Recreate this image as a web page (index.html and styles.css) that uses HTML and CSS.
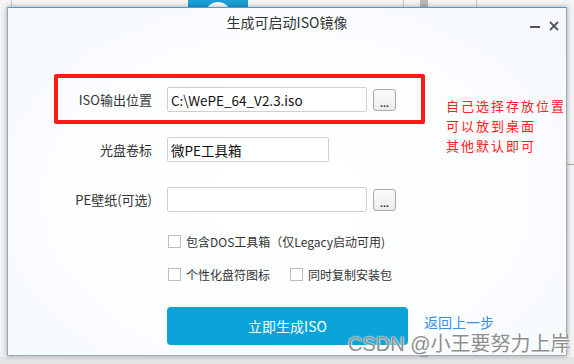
FILE: index.html
```html
<!DOCTYPE html>
<html lang="zh-CN">
<head>
    <meta charset="UTF-8">
    <title>生成可启动ISO镜像</title>
    <link rel="stylesheet" href="styles.css">
</head>
<body>

    <!-- 背景窗口 -->
    <div class="desktop">
        <div class="bg-tab"><span class="bg-tab-circle"></span></div>
        <div class="bg-line line-a"></div>
        <div class="bg-line line-b"></div>
        <div class="bg-line line-c"></div>
        <div class="bg-bar"></div>
        <div class="bg-bottom"></div>
        <div class="bg-side"></div>
    </div>

    <!-- 对话框 -->
    <div class="dialog">
        <div class="titlebar">
            <span class="title">生成可启动ISO镜像</span>
            <span class="win-min"></span>
            <span class="win-close">
                <svg width="10" height="10" viewBox="0 0 10 10"><path d="M1 1L9 9M9 1L1 9" stroke="#555" stroke-width="1.8"/></svg>
            </span>
        </div>

        <div class="form">
            <label class="field-label">ISO输出位置</label>
            <div class="field">
                <input class="text-input wide" type="text" value="C:\WePE_64_V2.3.iso">
                <button class="browse">...</button>
            </div>

            <label class="field-label">光盘卷标</label>
            <div class="field">
                <input class="text-input short" type="text" value="微PE工具箱">
            </div>

            <label class="field-label">PE壁纸(可选)</label>
            <div class="field">
                <input class="text-input wide" type="text" value="">
                <button class="browse">...</button>
            </div>

            <div class="checks">
                <div class="check-row">
                    <span class="check"><span class="box"></span>包含DOS工具箱（仅Legacy启动可用)</span>
                </div>
                <div class="check-row">
                    <span class="check"><span class="box"></span>个性化盘符图标</span>
                    <span class="check"><span class="box"></span>同时复制安装包</span>
                </div>
            </div>

            <div class="actions">
                <button class="primary">立即生成ISO</button>
                <a class="back-link" href="#">返回上一步</a>
            </div>
        </div>
    </div>

    <!-- 标注 -->
    <div class="mark-box"></div>
    <div class="mark-note">自己选择存放位置<br>可以放到桌面<br>其他默认即可</div>
    <div class="watermark">CSDN @小王要努力上岸</div>

</body>
</html>
```

FILE: styles.css
```css
body {
    margin: 0;
    width: 574px;
    height: 364px;
    overflow: hidden;
    position: relative;
    background-color: #eeeeee;
    font-family: "Noto Sans CJK SC", "Noto Sans", sans-serif;
}

/* 背景窗口 */
.desktop {
    position: absolute;
    left: 0;
    top: 0;
    width: 574px;
    height: 364px;
    background-color: #f3f3f3;
}

.bg-tab {
    position: absolute;
    left: 188px;
    top: 0;
    width: 60px;
    height: 8px;
    background-color: #1aa0d6;
    overflow: hidden;
}

.bg-tab-circle {
    position: absolute;
    left: 17px;
    top: 2px;
    width: 26px;
    height: 26px;
    border-radius: 50%;
    background-color: #ffffff;
}

.bg-line {
    position: absolute;
    top: 0;
    width: 1px;
    height: 364px;
    background-color: #c9c9c9;
}

.line-a { left: 11px; }
.line-b { left: 403px; }
.line-c { left: 476px; }

.bg-bar {
    position: absolute;
    left: 420px;
    top: 0;
    width: 8px;
    height: 364px;
    background-color: #b5b5b5;
}

.bg-bottom {
    position: absolute;
    left: 0;
    top: 357px;
    width: 574px;
    height: 7px;
    background-color: #e4e4e4;
}

.bg-side {
    position: absolute;
    left: 567px;
    top: 164px;
    width: 7px;
    height: 1px;
    background-color: #a9a9a9;
}

/* 对话框 */
.dialog {
    position: absolute;
    left: 7px;
    top: 7px;
    width: 560px;
    height: 349px;
    box-sizing: border-box;
    border: 1px solid #9aa9b6;
    border-top-color: #4a9fd0;
    background: radial-gradient(ellipse at 50% 55%, #ffffff 0%, #fbfdff 55%, #f5f9fc 100%);
    box-shadow: 0 0 5px rgba(0, 0, 0, 0.35);
}

.titlebar {
    height: 28px;
    display: flex;
    align-items: center;
    justify-content: center;
    position: relative;
}

.title {
    font-size: 14px;
    color: #333333;
}

.win-min {
    position: absolute;
    right: 26px;
    top: 18px;
    width: 10px;
    height: 2px;
    background-color: #555555;
}

.win-close {
    position: absolute;
    right: 7px;
    top: 13px;
}

.win-close svg {
    display: block;
}

/* 表单 */
.form {
    display: grid;
    grid-template-columns: 144px 1fr;
    column-gap: 15px;
    row-gap: 25px;
    align-items: center;
    padding-top: 51px;
}

.field-label {
    text-align: right;
    font-size: 13px;
    color: #333333;
}

.field {
    display: flex;
    align-items: center;
    gap: 6px;
    height: 25px;
}

.text-input {
    box-sizing: border-box;
    height: 25px;
    border: 1px solid #cfcfcf;
    border-radius: 2px;
    background-color: #ffffff;
    padding: 0 3px;
    font-family: "Noto Sans CJK SC", "Noto Sans", sans-serif;
    font-size: 13.5px;
    color: #111111;
    outline: none;
}

.text-input.wide {
    width: 200px;
}

.text-input.short {
    width: 162px;
}

.browse {
    box-sizing: border-box;
    width: 23px;
    height: 22px;
    padding: 6px 0 0;
    border: 1px solid #ababab;
    border-radius: 3px;
    background: linear-gradient(#fbfbfb, #ececec);
    font-family: "Liberation Sans", sans-serif;
    font-size: 11px;
    font-weight: bold;
    color: #333333;
    line-height: 10px;
}

.checks {
    grid-column: 2;
    margin-top: -4px;
    display: flex;
    flex-direction: column;
    gap: 17px;
}

.check-row {
    display: flex;
    height: 16px;
    align-items: center;
    gap: 19px;
}

.check {
    display: flex;
    align-items: center;
    font-size: 12px;
    color: #333333;
    padding-left: 1px;
}

.box {
    width: 11px;
    height: 11px;
    border: 1px solid #bdbdbd;
    background-color: #ffffff;
    margin-right: 5px;
}

.actions {
    grid-column: 2;
    display: flex;
    align-items: center;
}

.primary {
    width: 241px;
    height: 38px;
    border: none;
    border-radius: 4px;
    background-color: #0aa4d9;
    color: #ffffff;
    font-family: "Noto Sans CJK SC", "Noto Sans", sans-serif;
    font-size: 14px;
    padding: 0;
}

.back-link {
    margin-left: 16px;
    margin-top: -6px;
    font-family: "Liberation Sans", "Noto Sans CJK SC", sans-serif;
    font-size: 14px;
    line-height: 16px;
    color: #3a8ee6;
    text-decoration: none;
}

/* 标注 */
.mark-box {
    position: absolute;
    left: 54px;
    top: 74px;
    width: 363px;
    height: 42px;
    border: 4px solid #ff1a1a;
    border-radius: 2px;
}

.mark-note {
    position: absolute;
    left: 446px;
    top: 96px;
    font-size: 13px;
    line-height: 20px;
    letter-spacing: 2px;
    color: #ff2020;
}

.watermark {
    position: absolute;
    left: 348px;
    top: 333px;
    font-family: "Liberation Sans", "Noto Sans CJK SC", sans-serif;
    font-size: 20px;
    line-height: 22px;
    color: #8e8e8e;
    text-shadow: 0 0 2px #ffffff, 0 0 2px #ffffff;
    white-space: nowrap;
}
```
